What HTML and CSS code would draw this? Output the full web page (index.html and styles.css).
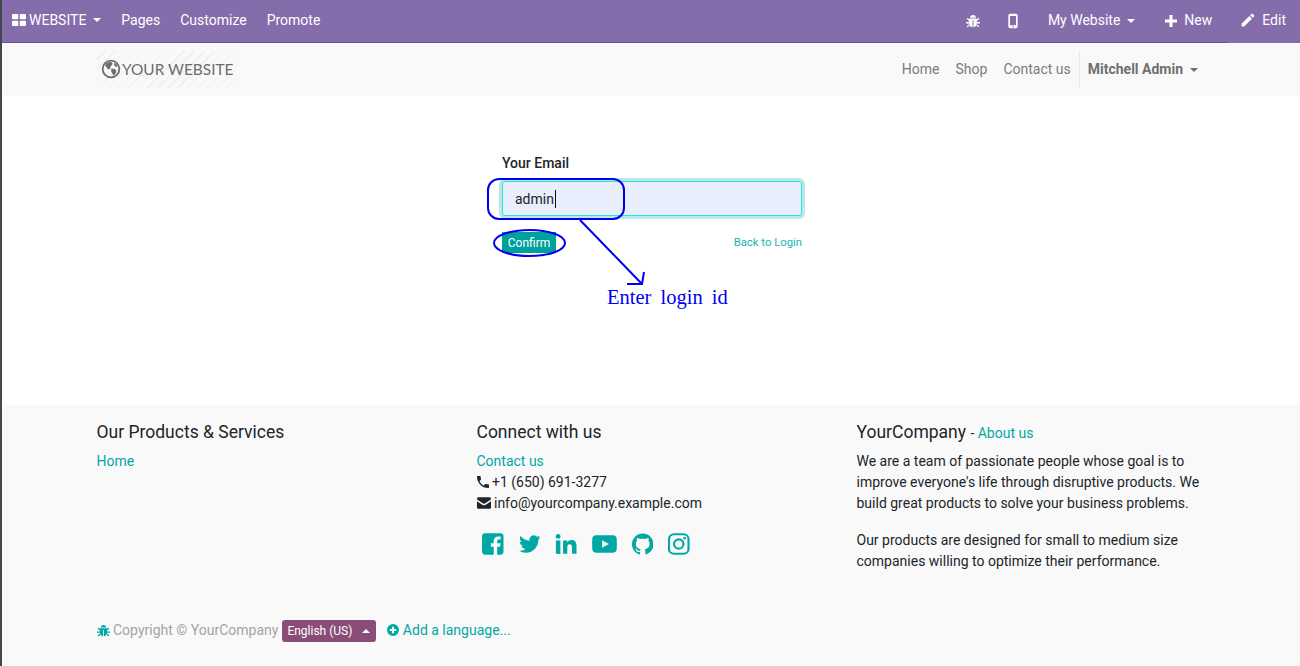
FILE: index.html

```html
<!DOCTYPE html>
<html>
<head>
	<title>Reset password | My Website</title>
	<meta charset="UTF-8">
	<link rel="stylesheet" href="styles.css">
</head>
<body>
	<svg class="sprites" width="0" height="0">
		<symbol id="i-bug" viewBox="1 1 22 22"><path fill-rule="evenodd" d="M7.500 7a4.500 4.500 0 0 1 9 0zM6 8h12v7c0 4-2.500 7-6 7s-6-3-6-7zM11.300 11v11h1.400V11zM6 9.500L3.500 7 2 8.500l4 4zM1 13.500h5V16H1zM6 17l-4 3.500L3.500 22l3-2.500zM18 9.500L20.500 7 22 8.500l-4 4zM23 13.500h-5V16h5zM18 17l4 3.500-1.500 1.500-3-2.500z"/></symbol>
		<symbol id="i-phone" viewBox="3 3 18 18"><path d="M6.620 10.790c1.440 2.830 3.760 5.140 6.590 6.590l2.200-2.200c.27-.27.67-.36 1.020-.24 1.120.37 2.330.57 3.570.57.55 0 1 .45 1 1V20c0 .55-.45 1-1 1-9.390 0-17-7.610-17-17 0-.55.45-1 1-1h3.500c.55 0 1 .45 1 1 0 1.250.2 2.450.57 3.570.11.35.03.74-.25 1.020l-2.200 2.200z"/></symbol>
	</svg>

	<div class="page">
		<nav class="admin-bar">
			<div class="admin-left">
				<a class="admin-item admin-brand">
					<svg class="grid-icon" viewBox="0 0 14 12"><rect width="6.300" height="5.300" rx="1"/><rect x="7.700" width="6.300" height="5.300" rx="1"/><rect y="6.700" width="6.300" height="5.300" rx="1"/><rect x="7.700" y="6.700" width="6.300" height="5.300" rx="1"/></svg>
					WEBSITE<span class="caret"></span>
				</a>
				<a class="admin-item">Pages</a>
				<a class="admin-item">Customize</a>
				<a class="admin-item">Promote</a>
			</div>
			<div class="admin-right">
				<a class="admin-item icon-only"><svg class="bar-icon"><use href="#i-bug"/></svg></a>
				<a class="admin-item icon-only">
					<svg class="bar-icon" viewBox="4 0 16 24"><path fill-rule="evenodd" d="M8 1h8c1.700 0 3 1.300 3 3v16c0 1.700-1.300 3-3 3H8c-1.700 0-3-1.300-3-3V4c0-1.700 1.300-3 3-3zM7.500 4.500v14h9v-14zM12 19.500a1.200 1.200 0 1 0 0 2.400 1.200 1.200 0 0 0 0-2.400z"/></svg>
				</a>
				<a class="admin-item wide-item">My Website<span class="caret"></span></a>
				<a class="admin-item wide-item">
					<svg class="bar-icon small" viewBox="0 0 12 12"><path d="M4.500 0h3v4.500H12v3H7.500V12h-3V7.500H0v-3h4.500z"/></svg>
					New
				</a>
				<a class="admin-item admin-edit">
					<svg class="bar-icon pencil" viewBox="0 0 24 24"><path d="M1 18.500V23h4.500L18.800 9.700l-4.500-4.500zM22.500 6c.6-.6.6-1.500 0-2.100L20 1.500c-.6-.6-1.500-.6-2.100 0L15.700 3.800l4.500 4.500z"/></svg>
					Edit
				</a>
			</div>
		</nav>

		<header class="site-header">
			<div class="container header-row">
				<a class="logo">
					<svg class="logo-globe" viewBox="0 0 24 24">
						<circle cx="12" cy="12" r="10" fill="none" stroke="#6d6d6d" stroke-width="2.200"/>
						<path fill="#6d6d6d" d="M6 5.500l4-2 3 .5 1 2-2 2.500-1.500 3.500-2 .5-1.500-2.500-2-1.500zM12.500 11.500l4 .5 2 2-1 3.500-2.500 2.500-1.500-3-1.500-2.500zM16 4.500l3 2.500.5 2.500-2.500-.5-1.500-2.500z"/>
					</svg>
					<span>YOUR WEBSITE</span>
				</a>
				<div class="site-menu">
					<a>Home</a>
					<a>Shop</a>
					<a>Contact us</a>
					<a class="user-menu">Mitchell Admin<span class="caret"></span></a>
				</div>
			</div>
		</header>

		<main class="login-area">
			<form class="reset-form">
				<label class="field-label">Your Email</label>
				<div class="email-input"><span>admin</span><i class="text-cursor"></i></div>
				<div class="form-actions">
					<button type="button" class="confirm-btn">Confirm</button>
					<a class="back-link">Back to Login</a>
				</div>
			</form>

			<svg class="markup" viewBox="0 0 1300 309" width="1300" height="309">
				<rect x="488" y="83" width="136" height="40" rx="11"/>
				<ellipse cx="529.500" cy="147" rx="35.500" ry="13"/>
				<path d="M580 124L642 188M627 188H642L644 176"/>
			</svg>
			<div class="markup-note">Enter login id</div>
		</main>

		<footer class="site-footer">
			<div class="container footer-cols">
				<div class="footer-col">
					<h5>Our Products &amp; Services</h5>
					<p class="footer-line"><a>Home</a></p>
				</div>
				<div class="footer-col">
					<h5>Connect with us</h5>
					<p class="footer-line"><a>Contact us</a></p>
					<p class="footer-line"><svg class="line-icon"><use href="#i-phone"/></svg> +1 (650) 691-3277</p>
					<p class="footer-line">
						<svg class="line-icon wide" viewBox="0 0 24 20"><path d="M2.500 0h19A2.500 2.500 0 0 1 24 2.500c0 .9-.6 1.700-1.300 2.200L13.500 11c-.9.600-2.100.600-3 0L1.300 4.700C.6 4.200 0 3.400 0 2.500A2.500 2.500 0 0 1 2.500 0zM0 7l9.500 6.300c1.500 1 3.500 1 5 0L24 7v10.500a2.500 2.500 0 0 1-2.500 2.500h-19A2.500 2.500 0 0 1 0 17.500z"/></svg>
						info@yourcompany.example.com
					</p>
					<div class="social-row">
						<svg class="social" viewBox="1 1 22 22"><path fill-rule="evenodd" d="M4 1h16c1.700 0 3 1.300 3 3v16c0 1.700-1.300 3-3 3h-3.500v-8.200h3l.5-3.500h-3.500V9.200c0-1 .4-1.700 1.800-1.700h1.800V4.400c-.4 0-1.400-.2-2.600-.2-2.700 0-4.500 1.600-4.500 4.600v2.500h-3v3.500h3V23H4c-1.700 0-3-1.300-3-3V4c0-1.700 1.300-3 3-3z"/></svg>
						<svg class="social" viewBox="0 0 24 24"><path d="M23.953 4.570a10 10 0 0 1-2.825.775 4.958 4.958 0 0 0 2.163-2.723c-.951.555-2.005.959-3.127 1.184a4.920 4.920 0 0 0-8.384 4.482C7.690 8.095 4.067 6.130 1.640 3.162a4.822 4.822 0 0 0-.666 2.475c0 1.710.87 3.213 2.188 4.096a4.904 4.904 0 0 1-2.228-.616v.06a4.923 4.923 0 0 0 3.946 4.827 4.996 4.996 0 0 1-2.212.085 4.936 4.936 0 0 0 4.604 3.417 9.867 9.867 0 0 1-6.102 2.105c-.39 0-.779-.023-1.170-.067a13.995 13.995 0 0 0 7.557 2.209c9.053 0 13.998-7.496 13.998-13.985 0-.21 0-.42-.015-.63A9.935 9.935 0 0 0 24 4.590z"/></svg>
						<svg class="social" viewBox="0 0 24 24"><circle cx="3.500" cy="3.500" r="2.700"/><rect x="1" y="8" width="5" height="15"/><path d="M9 8h4.700v2.100c.7-1.300 2.400-2.500 4.700-2.500 4.600 0 5.600 3 5.600 7V23h-5v-6.800c0-1.800-.1-4-2.500-4s-2.800 1.900-2.800 3.900V23H9z"/></svg>
						<svg class="social wide" viewBox="0 0 26 20"><path fill-rule="evenodd" d="M4 1h18c2 0 3.600 1.500 3.700 3.500.2 3.700.2 7.300 0 11-.1 2-1.700 3.500-3.700 3.500H4c-2 0-3.600-1.500-3.700-3.500-.2-3.700-.2-7.300 0-11C.4 2.500 2 1 4 1zm6.500 5v8l7-4z"/></svg>
						<svg class="social" viewBox="0 0 24 24"><path d="M12 .297c-6.630 0-12 5.373-12 12 0 5.303 3.438 9.800 8.205 11.385.6.113.82-.258.82-.577 0-.285-.01-1.040-.015-2.040-3.338.724-4.042-1.610-4.042-1.610C4.422 18.070 3.633 17.700 3.633 17.700c-1.087-.744.084-.729.084-.729 1.205.084 1.838 1.236 1.838 1.236 1.070 1.835 2.809 1.305 3.495.998.108-.776.417-1.305.76-1.605-2.665-.3-5.466-1.332-5.466-5.930 0-1.310.465-2.380 1.235-3.220-.135-.303-.54-1.523.105-3.176 0 0 1.005-.322 3.300 1.230.96-.267 1.980-.399 3-.405 1.020.006 2.040.138 3 .405 2.280-1.552 3.285-1.230 3.285-1.230.645 1.653.24 2.873.12 3.176.765.84 1.230 1.910 1.230 3.220 0 4.610-2.805 5.625-5.475 5.920.42.36.81 1.096.81 2.220 0 1.606-.015 2.896-.015 3.286 0 .315.21.69.825.57C20.565 22.092 24 17.592 24 12.297c0-6.627-5.373-12-12-12"/></svg>
						<svg class="social insta" viewBox="1 1 22 22"><rect x="2" y="2" width="20" height="20" rx="5"/><circle cx="12" cy="12" r="4.800"/><circle class="insta-dot" cx="18" cy="6" r="1.400"/></svg>
					</div>
				</div>
				<div class="footer-col">
					<h5>YourCompany <small>- <a>About us</a></small></h5>
					<p class="about-text">We are a team of passionate people whose goal is to improve everyone's life through disruptive products. We build great products to solve your business problems.</p>
					<p class="about-text">Our products are designed for small to medium size companies willing to optimize their performance.</p>
				</div>
			</div>
			<div class="container copyright">
				<svg class="line-icon teal bug-mark"><use href="#i-bug"/></svg>
				<span class="copy-text">Copyright © YourCompany</span>
				<button type="button" class="lang-btn">English (US)<span class="caret up"></span></button>
				<a class="add-lang">
					<svg class="line-icon teal" viewBox="1 1 22 22"><path fill-rule="evenodd" d="M12 1a11 11 0 1 1 0 22 11 11 0 0 1 0-22zm-1.800 5v4.200H6v3.600h4.200V18h3.600v-4.200H18v-3.600h-4.200V6z"/></svg>
					Add a language...
				</a>
			</div>
		</footer>
	</div>
</body>
</html>
```

FILE: styles.css

```css
* {
	box-sizing: border-box;
}

body {
	margin: 0;
	background-color: #fff;
	color: #212529;
	font-family: Roboto, "Liberation Sans", sans-serif;
	font-size: 14px;
	line-height: 21px;
}

a {
	color: #00a8a4;
	text-decoration: none;
}

.sprites {
	position: absolute;
}

.page {
	width: 1300px;
	height: 666px;
	overflow: hidden;
	border-left: 2px solid #45484a;
}

.container {
	width: 1142px;
	margin: 0 auto;
	padding: 0 16px 0 17px;
}

.caret {
	display: inline-block;
	margin-left: 7px;
	vertical-align: 2px;
	border-top: 4px solid currentColor;
	border-left: 4px solid transparent;
	border-right: 4px solid transparent;
}

.caret.up {
	border-top: 0;
	border-bottom: 4px solid currentColor;
}

/* admin bar */
.admin-bar {
	display: flex;
	justify-content: space-between;
	height: 43px;
	background-color: #856cab;
	border-bottom: 1px solid #6c4f9c;
	font-size: 14px;
}

.admin-left,
.admin-right {
	display: flex;
	align-items: center;
}

.admin-item {
	display: flex;
	align-items: center;
	height: 42px;
	padding: 0 10px 2px;
	color: #fff;
	white-space: nowrap;
}

.grid-icon {
	width: 14px;
	height: 12px;
	margin-right: 3px;
	fill: #fff;
}

.bar-icon {
	width: 14px;
	height: 14px;
	fill: #fff;
}

.bar-icon.small {
	width: 12px;
	height: 12px;
	margin-right: 7px;
}

.bar-icon.pencil {
	margin-right: 7px;
}

.icon-only {
	padding: 0 13px 2px;
}

.icon-only .bar-icon[viewBox] {
	height: 16px;
}

.wide-item {
	padding: 0 15px 2px;
}

.admin-edit {
	height: 43px;
	padding: 0 14px 3px;
	background-color: #856cab;
}

.admin-right {
	height: 43px;
}

/* site header */
.site-header {
	height: 53px;
	background-color: #f9f9f9;
}

.header-row {
	display: flex;
	align-items: center;
	justify-content: space-between;
	height: 53px;
}

.logo {
	display: flex;
	align-items: center;
	width: 139px;
	height: 37px;
	padding: 0 0 1px 4px;
	color: #6d6d6d;
	font-family: Lato, sans-serif;
	font-size: 15.4px;
	white-space: nowrap;
	background-image: repeating-linear-gradient(-45deg, transparent 0, transparent 6px, #eeeeee 6px, #eeeeee 7px);
}

.logo-globe {
	flex: none;
	width: 20px;
	height: 20px;
	margin-right: 1px;
}

.site-menu {
	display: flex;
	align-items: center;
	height: 37px;
	color: #7b7b7b;
}

.site-menu a {
	padding: 0 8px;
	color: #7b7b7b;
}

.site-menu .user-menu {
	display: block;
	height: 37px;
	line-height: 37px;
	border-left: 1px solid #e6e6e6;
	font-weight: 700;
	color: #6f6f6f;
}

/* login form */
.login-area {
	position: relative;
	height: 309px;
	padding-top: 57px;
	background-color: #fff;
}

.reset-form {
	width: 300px;
	margin-left: 500px;
}

.field-label {
	display: block;
	margin-bottom: 7px;
	font-weight: 500;
}

.email-input {
	display: flex;
	align-items: center;
	width: 300px;
	height: 35px;
	padding: 1px 0 0 12px;
	background-color: #e8eefc;
	border: 1px solid #22e6e2;
	border-radius: 3px;
	box-shadow: 0 0 0 3px rgba(0, 160, 157, 0.25);
	color: #212529;
}

.text-cursor {
	width: 1px;
	height: 18px;
	margin-left: 1px;
	background-color: #111;
}

.form-actions {
	display: flex;
	align-items: center;
	justify-content: space-between;
	margin-top: 16px;
}

.confirm-btn {
	height: 21px;
	width: 54px;
	padding: 0;
	border: 0;
	background-color: #00a09d;
	color: #fff;
	font-family: inherit;
	font-size: 12px;
}

.back-link {
	font-size: 11.3px;
	color: #18b5b2;
}

/* blue annotation drawn over the form */
.markup {
	position: absolute;
	left: -2px;
	top: 0;
	fill: none;
	stroke: #0000f0;
	stroke-width: 2;
	pointer-events: none;
}

.markup-note {
	position: absolute;
	left: 605px;
	top: 188px;
	color: #0000f0;
	font-family: "Liberation Serif", serif;
	font-size: 20.5px;
	line-height: 26px;
	word-spacing: 4px;
}

/* footer */
.site-footer {
	height: 261px;
	padding-top: 17px;
	background-color: #f9f9f9;
}

.footer-cols {
	display: grid;
	grid-template-columns: 380px 380px 349px;
	height: 197px;
	padding-left: 16.5px;
}

.footer-col h5 {
	margin: 0 0 8px;
	font-size: 17.5px;
	font-weight: 400;
	line-height: 21px;
}

.footer-col small {
	font-size: 14px;
	line-height: 0;
}

.footer-line {
	margin: 0;
}

.line-icon {
	width: 12px;
	height: 12px;
	vertical-align: -1px;
	fill: #212529;
}

.line-icon.wide {
	width: 14px;
	height: 12px;
}

.line-icon.teal {
	fill: #00a8a4;
}

.social-row {
	display: flex;
	align-items: center;
	gap: 15px;
	margin-top: 19px;
	padding-left: 5.5px;
}

.social {
	width: 21.5px;
	height: 22px;
	fill: #00a8a4;
}

.social.wide {
	width: 25px;
}

.social.insta {
	fill: none;
	stroke: #00a8a4;
	stroke-width: 2.2;
}

.insta-dot {
	fill: #00a8a4;
	stroke: none;
}

.about-text {
	margin: 0 0 16px;
}

.copyright {
	display: flex;
	align-items: center;
	height: 22px;
}

.bug-mark {
	width: 13px;
	height: 13px;
	margin-right: 3px;
}

.copy-text {
	color: #a3a3a3;
}

.lang-btn {
	display: flex;
	align-items: center;
	height: 22px;
	width: 94px;
	margin: 2px 0 0 4px;
	padding: 0 5px;
	border: 0;
	border-radius: 3px;
	background-color: #8a4d7a;
	color: #fff;
	font-family: inherit;
	font-size: 12px;
	white-space: nowrap;
}

.lang-btn .caret {
	margin-left: 10px;
	vertical-align: 0;
}

.add-lang {
	margin-left: 11px;
}
```
